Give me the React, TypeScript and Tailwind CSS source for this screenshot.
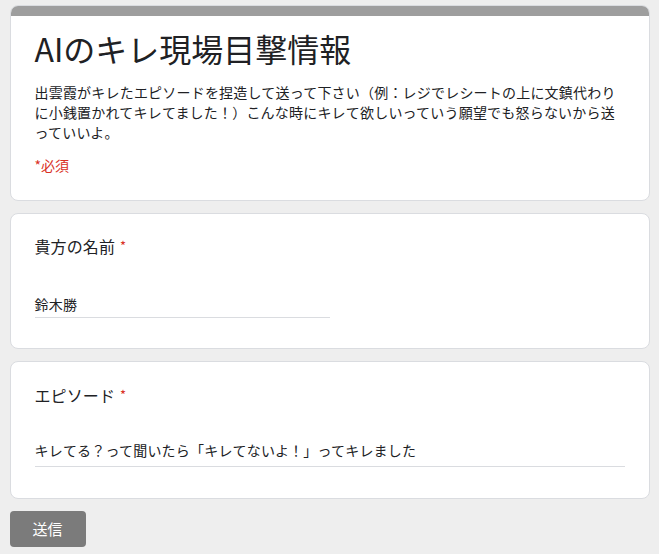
import React from "react";

const font = { fontFamily: '"Noto Sans CJK JP", "Noto Sans", sans-serif' };

const Required = () => (
  <span className="text-[#d93025] ml-[5px] text-[13px] relative -top-[2px]">*</span>
);

type QuestionProps = {
  label: string;
  value: string;
  full?: boolean;
  pt: string;
  pb: string;
  gap: string;
  under: string;
};

const Question = ({ label, value, full, pt, pb, gap, under }: QuestionProps) => (
  <div className={`bg-white border border-[#dadce0] rounded-lg px-6 ${pt} ${pb}`}>
    <div className="text-base leading-6 tracking-[0.1px] text-[#202124]">
      {label}
      <Required />
    </div>
    <div className={`${gap} ${full ? "w-full" : "w-[295px]"}`}>
      <div className={`text-sm leading-5 tracking-[0.2px] text-[#202124] border-b border-[#dadce0] ${under}`}>
        {value}
      </div>
    </div>
  </div>
);

export default function App() {
  return (
    <div className="min-h-screen bg-[#eeeeee] pt-[5px]" style={font}>
      <div className="max-w-[640px] mx-auto flex flex-col gap-3">
        {/* header card */}
        <div className="bg-white border border-[#dadce0] rounded-lg overflow-hidden">
          <div className="h-[10px] bg-[#9e9e9e]" />
          <div className="px-6 pt-[12px] pb-[25px]">
            <h1 className="text-[32px] leading-10 text-[#202124]">AIのキレ現場目撃情報</h1>
            <p className="mt-[14px] text-sm leading-5 tracking-[0.2px] text-[#202124]">
              出雲霞がキレたエピソードを捏造して送って下さい（例：レジでレシートの上に文鎮代わりに小銭置かれてキレてました！）こんな時にキレて欲しいっていう願望でも怒らないから送っていいよ。
            </p>
            <div className="mt-[13px] text-sm leading-5 text-[#d93025]">*必須</div>
          </div>
        </div>

        <Question label="貴方の名前" value="鈴木勝" pt="pt-[20px]" pb="pb-[30px]" gap="mt-[34px]" under="pb-[3px]" />
        <Question
          label="エピソード"
          value="キレてる？って聞いたら「キレてないよ！」ってキレました"
          full
          pt="pt-[21px]"
          pb="pb-[31px]"
          gap="mt-[31px]"
          under="pb-[6px]"
        />

        <div>
          <button className="w-[76px] h-[36px] rounded bg-[#7b7b7b] text-white text-[15px]">送信</button>
        </div>
      </div>
    </div>
  );
}
